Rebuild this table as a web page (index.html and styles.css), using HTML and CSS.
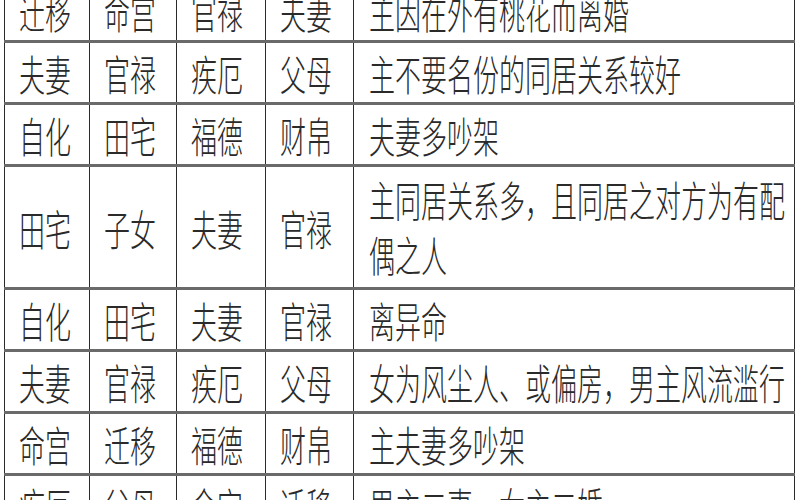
FILE: index.html
```html
<!DOCTYPE html>
<html lang="zh">
<head>
<meta charset="utf-8">
<title>宫位表</title>
<link rel="stylesheet" href="styles.css">
</head>
<body>
<table class="grid">
  <colgroup>
    <col class="c1"><col class="c2"><col class="c3"><col class="c4"><col class="c5">
  </colgroup>
  <tbody>
    <tr><td><span class="t">迁移</span></td><td><span class="t">命宫</span></td><td><span class="t">官禄</span></td><td><span class="t">夫妻</span></td><td><span class="t">主因在外有桃花而离婚</span></td></tr>
    <tr><td><span class="t">夫妻</span></td><td><span class="t">官禄</span></td><td><span class="t">疾厄</span></td><td><span class="t">父母</span></td><td><span class="t">主不要名份的同居关系较好</span></td></tr>
    <tr><td><span class="t">自化</span></td><td><span class="t">田宅</span></td><td><span class="t">福德</span></td><td><span class="t">财帛</span></td><td><span class="t">夫妻多吵架</span></td></tr>
    <tr class="tall"><td><span class="t">田宅</span></td><td><span class="t">子女</span></td><td><span class="t">夫妻</span></td><td><span class="t">官禄</span></td><td><span class="t">主同居关系多，且同居之对方为有配偶之人</span></td></tr>
    <tr><td><span class="t">自化</span></td><td><span class="t">田宅</span></td><td><span class="t">夫妻</span></td><td><span class="t">官禄</span></td><td><span class="t">离异命</span></td></tr>
    <tr><td><span class="t">夫妻</span></td><td><span class="t">官禄</span></td><td><span class="t">疾厄</span></td><td><span class="t">父母</span></td><td><span class="t">女为风尘人、或偏房，男主风流滥行</span></td></tr>
    <tr><td><span class="t">命宫</span></td><td><span class="t">迁移</span></td><td><span class="t">福德</span></td><td><span class="t">财帛</span></td><td><span class="t">主夫妻多吵架</span></td></tr>
    <tr><td><span class="t">疾厄</span></td><td><span class="t">父母</span></td><td><span class="t">命宫</span></td><td><span class="t">迁移</span></td><td><span class="t">男主二妻，女主二婚</span></td></tr>
  </tbody>
</table>
</body>
</html>
```

FILE: styles.css
```css
html, body {
  margin: 0;
  padding: 0;
  background: #ffffff;
  overflow: hidden;
}

.grid {
  border-collapse: collapse;
  table-layout: fixed;
  width: 790px;
  margin: -22px 0 0 4px;
  font-family: "Noto Sans CJK SC", "Noto Sans CJK TC", sans-serif;
  font-size: 26px;
  font-weight: 300;
  color: #2a2a2a;
}

.c1 { width: 85px; }
.c2 { width: 87px; }
.c3 { width: 89px; }
.c4 { width: 88px; }
.c5 { width: 441px; }

.grid tr { height: 62px; }
.grid tr.tall { height: 123px; }

.grid td {
  border-left: 1px solid #2a2a2a;
  border-right: 1px solid #2a2a2a;
  border-top: 3px solid #6a6a6a;
  border-bottom: 3px solid #6a6a6a;
  padding: 0 4px 0 14px;
  vertical-align: middle;
  text-align: left;
}

.grid td:last-child {
  padding: 0 6px 0 15px;
}

.t {
  display: inline-block;
  line-height: 34px;
  transform: scaleY(1.6);
  letter-spacing: 0;
}
```
